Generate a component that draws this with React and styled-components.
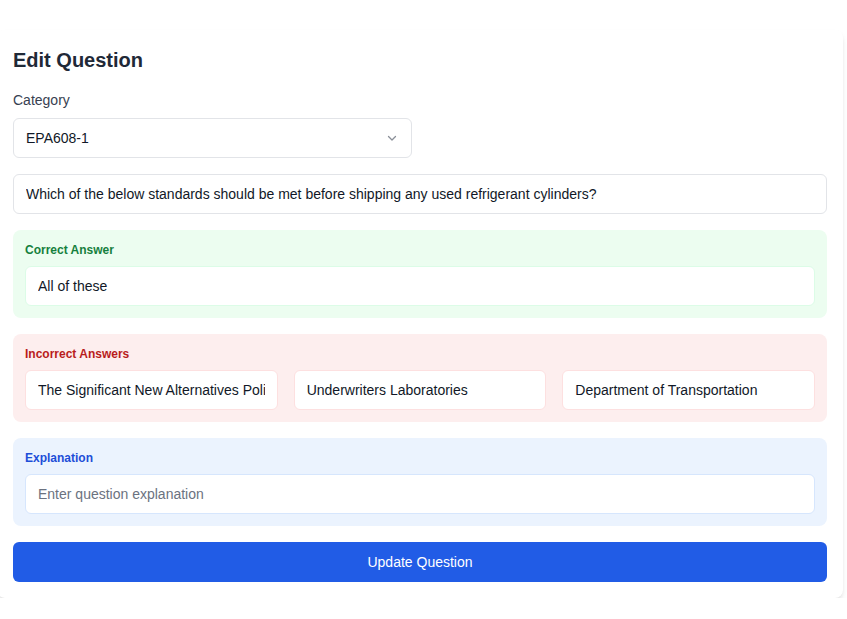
import React from "react";
import styled, { createGlobalStyle } from "styled-components";

const GlobalStyle = createGlobalStyle`
  * {
    box-sizing: border-box;
  }

  body {
    margin: 0;
    background: #ffffff;
    font-family: "Liberation Sans", Arial, sans-serif;
    color: #111827;
  }
`;

const TONES = {
  green: { bg: "#ecfdf0", label: "#15803d", border: "#dcfce7" },
  red: { bg: "#fdeeee", label: "#b91c1c", border: "#fde0e0" },
  blue: { bg: "#ebf3fe", label: "#1d4ed8", border: "#d6e6fd" },
};

const INCORRECT = [
  "The Significant New Alternatives Policy (SNAP) program",
  "Underwriters Laboratories",
  "Department of Transportation",
];

export default function App() {
  return (
    <>
      <GlobalStyle />
      <Page>
        <Card>
          <Title>Edit Question</Title>

          <Field>
            <Label>Category</Label>
            <SelectWrap>
              <Select defaultValue="EPA608-1">
                <option>EPA608-1</option>
                <option>EPA608-2</option>
                <option>EPA608-3</option>
              </Select>
              <Chevron width="12" height="12" viewBox="0 0 12 12">
                <polyline points="2.5,4.5 6,8 9.5,4.5" fill="none" stroke="#8a8f98" strokeWidth="1.3" strokeLinecap="round" strokeLinejoin="round" />
              </Chevron>
            </SelectWrap>
          </Field>

          <Input defaultValue="Which of the below standards should be met before shipping any used refrigerant cylinders?" />

          <Section $tone="green">
            <SectionLabel $tone="green">Correct Answer</SectionLabel>
            <Input $tone="green" defaultValue="All of these" />
          </Section>

          <Section $tone="red">
            <SectionLabel $tone="red">Incorrect Answers</SectionLabel>
            <AnswerGrid>
              {INCORRECT.map((answer) => (
                <Input key={answer} $tone="red" defaultValue={answer} />
              ))}
            </AnswerGrid>
          </Section>

          <Section $tone="blue">
            <SectionLabel $tone="blue">Explanation</SectionLabel>
            <Input $tone="blue" placeholder="Enter question explanation" />
          </Section>

          <Button>Update Question</Button>
        </Card>
      </Page>
    </>
  );
}

const Page = styled.div`
  padding-top: 30px;
  padding-right: 4px;
`;

const Card = styled.div`
  display: flex;
  flex-direction: column;
  gap: 16px;
  margin-left: -3px;
  padding: 16px;
  background: #ffffff;
  border-radius: 8px;
  box-shadow: 0 4px 6px -1px rgba(0, 0, 0, 0.1), 0 2px 4px -2px rgba(0, 0, 0, 0.1);
`;

const Title = styled.h2`
  margin: 0;
  font-size: 20px;
  line-height: 28px;
  font-weight: 700;
  color: #1f2937;
`;

const Field = styled.div`
  display: flex;
  flex-direction: column;
  gap: 8px;
`;

const Label = styled.label`
  font-size: 14px;
  line-height: 20px;
  color: #374151;
`;

const SelectWrap = styled.div`
  position: relative;
  width: 399px;
`;

const Select = styled.select`
  appearance: none;
  width: 100%;
  height: 40px;
  padding: 0 12px;
  border: 1px solid #e2e4e8;
  border-radius: 6px;
  background: #ffffff;
  font-family: inherit;
  font-size: 14px;
  color: #111827;
  outline: none;
`;

const Chevron = styled.svg`
  position: absolute;
  right: 14px;
  top: 14px;
  pointer-events: none;
`;

const Input = styled.input`
  width: 100%;
  min-width: 0;
  height: 40px;
  padding: 0 12px;
  border: 1px solid ${({ $tone }) => ($tone ? TONES[$tone].border : "#e2e4e8")};
  border-radius: 6px;
  background: #ffffff;
  font-family: inherit;
  font-size: 14px;
  color: #111827;
  outline: none;

  &::placeholder {
    color: #6b7280;
  }
`;

const Section = styled.div`
  display: flex;
  flex-direction: column;
  gap: 8px;
  padding: 12px;
  border-radius: 8px;
  background: ${({ $tone }) => TONES[$tone].bg};
`;

const SectionLabel = styled.div`
  font-size: 12px;
  line-height: 16px;
  font-weight: 700;
  color: ${({ $tone }) => TONES[$tone].label};
`;

const AnswerGrid = styled.div`
  display: grid;
  grid-template-columns: repeat(3, 1fr);
  gap: 16px;
`;

const Button = styled.button`
  height: 40px;
  border: none;
  border-radius: 6px;
  background: #215ce6;
  color: #ffffff;
  font-family: inherit;
  font-size: 14px;
  font-weight: 500;
  cursor: pointer;
`;
